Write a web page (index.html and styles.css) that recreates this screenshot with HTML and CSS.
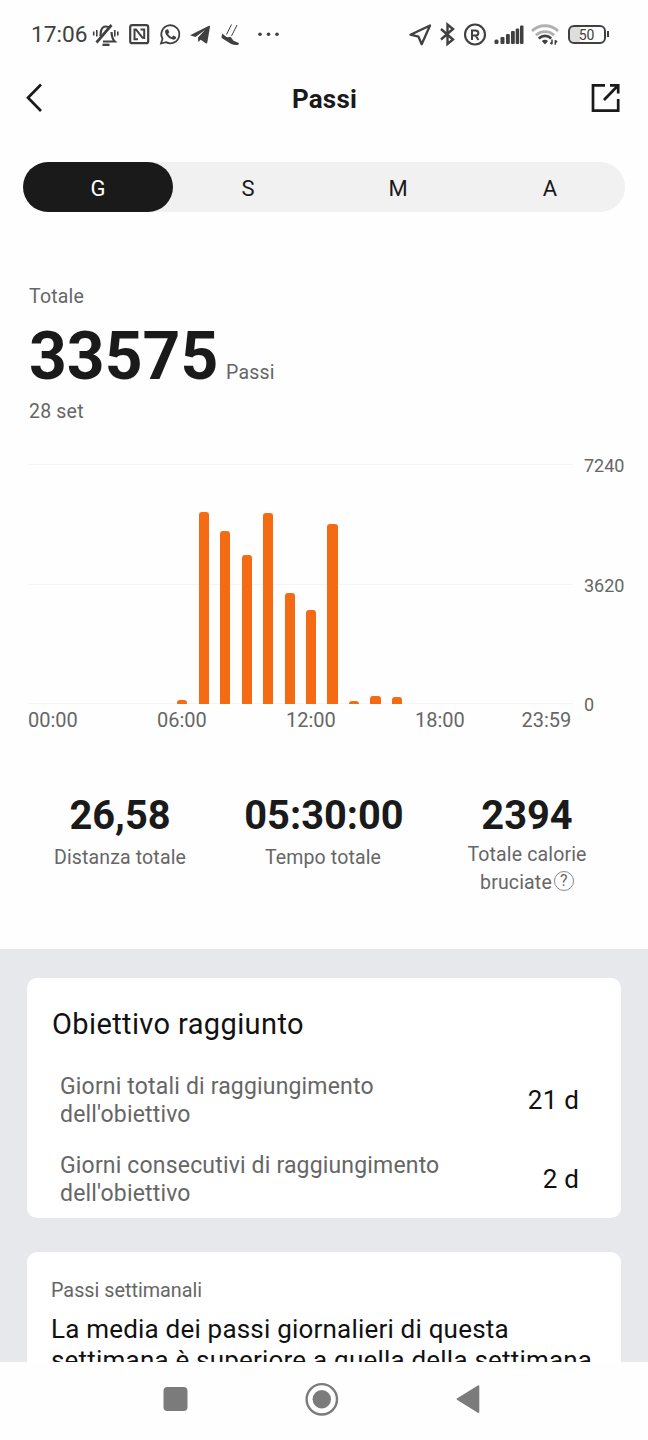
FILE: index.html
```html
<!DOCTYPE html>
<html lang="it">
<head>
<meta charset="utf-8">
<title>Passi</title>
<link rel="stylesheet" href="styles.css">
</head>
<body>
<div class="status">
  <span class="clock">17:06</span>
  <svg class="status-left" width="192" height="30" viewBox="92 20 192 30" fill="none" stroke="#404040" stroke-width="2">
    <path d="M100.500 36c.2-2 .1-3 .4-4.500.7-3.500 2.600-5 5.100-5 1.500 0 2.600.4 3.500 1.300M111.500 32c.2 4.500.7 7 3.300 9.500H103" stroke-width="2.200"/>
    <path d="M102.500 44.800h7" stroke-width="2.400"/>
    <path d="M96.500 42.500l15-17.500" stroke-width="2.700"/>
    <path d="M93.700 31.500v4M96.800 30v6.500M114.800 30v6.500M117.800 31.500v4" stroke-width="1.600"/>
    <rect x="130.200" y="25.200" width="18" height="18" rx="2" stroke-width="2.200"/>
    <path d="M138 39.300h-3.500V29.500h1.500l7 8.800M140.500 29.500h3.700V39" stroke-width="2"/>
    <path d="M161 43.500l1.500-4.800a9 9 0 1 1 3.400 3.400z" stroke-width="1.800"/>
    <path d="M166.500 29.500l1.500-.3 1.300 3-1.200 1.500c.8 1.700 2 2.700 3.700 3.500l1.500-1.600 2.900 1.400c0 2-1.700 2.900-3.300 2.600-3.800-.7-7.300-4.300-7.800-7.500-.2-1.200.5-2 1.400-2.600z" fill="#404040" stroke="none"/>
    <path d="M190 35.300L209 25.800c.8-.4 1.200 0 1 .8L207.300 42.500c-.2 1-.8 1.200-1.600.7l-5-3.500-2.500 2.300-.2-4.500 7-7.500-9.500 7z" fill="#404040" stroke="none"/>
    <path d="M231.500 24.500l-5 10M237 25l-5.500 11" stroke-width="1"/>
    <path d="M222.500 33.500c-.8 1.500-1 3-.8 4.500l9.500 6c2.500 1 5 1.300 7.300.8l.3-1.800-5.300-2.300-3-4-2.500.5c-2 0-3.500-1.700-5.500-3.700z" fill="#404040" stroke="none"/>
    <g fill="#404040" stroke="none"><circle cx="260" cy="34.300" r="1.800"/><circle cx="268.500" cy="34.300" r="1.800"/><circle cx="277" cy="34.300" r="1.800"/></g>
  </svg>
  <svg class="status-right" width="152" height="30" viewBox="408 20 152 30" fill="none" stroke="#404040" stroke-width="2">
    <path d="M430 25.500L410.500 34.700l8 2 3.200 7.600z" stroke-width="2.300" stroke-linejoin="round"/>
    <path d="M441 29l12 10.500-5.500 4.500v-19.500l5.500 4.500-12 10.500" stroke-width="2.400"/>
    <circle cx="475" cy="34.500" r="10" stroke-width="2.100"/>
    <path d="M472 40v-9.500h3.500c3.800 0 3.800 5 0 5H472M475.500 35.500l3 4.500" stroke-width="2"/>
    <g fill="#404040" stroke="none"><rect x="494.500" y="39.500" width="4" height="4.500" rx="1.500"/><rect x="500.500" y="37" width="4" height="7" rx="1"/><rect x="506" y="34" width="3.800" height="10" rx="1"/><rect x="511" y="31" width="3.800" height="13" rx="1"/><rect x="515.700" y="28.500" width="3.500" height="15.500" rx="1"/><rect x="520" y="25.500" width="3.500" height="18.500" rx="1"/></g>
    <path d="M532 31c7-7 19-7 26 0M536 35.300c5-5 13-5 18 0" stroke="#b0b0b0" stroke-width="2.800"/>
    <path d="M538.800 38.500c3.500-3.500 9-3.500 12.400 0" stroke-width="2.600"/>
    <path d="M541.800 41c1.800-1.600 4.600-1.600 6.200 0L545 44.500z" fill="#404040" stroke="none"/>
    <path d="M552 39.500v4.800m-1.700-1.700l1.700 1.700M555.300 44.800v-4.600m1.700 2l-1.700-2" stroke-width="1.500"/>
  </svg>
  <div class="battery"><span>50</span></div><i class="battery-tip"></i>
</div>

<header class="header">
  <svg width="18" height="32" viewBox="0 0 18 32"><path d="M16 2.500L3 15.700 16 29" fill="none" stroke="#1a1a1a" stroke-width="2.700"/></svg>
  <h1>Passi</h1>
  <svg width="30" height="30" viewBox="0 0 30 30" fill="none" stroke="#1a1a1a" stroke-width="2.700"><path d="M15 2.300H3v25.400h25.200V16M20 2.300h8.200v8.200M28 2.500L14 17"/></svg>
</header>

<nav class="tabs"><span class="active">G</span><span>S</span><span>M</span><span>A</span></nav>

<section class="summary">
  <p class="label">Totale</p>
  <p class="total"><strong>33575</strong><span>Passi</span></p>
  <p class="label">28 set</p>
</section>

<section class="chart">
  <div class="plot">
    <i></i><i></i><i></i><i></i><i></i><i></i>
    <i style="height:4.500px"></i><i style="height:192px"></i><i style="height:173px"></i><i style="height:149px"></i><i style="height:191.500px"></i><i style="height:111px"></i><i style="height:94px"></i><i style="height:180.500px"></i><i style="height:3px"></i><i style="height:8px"></i><i style="height:7px"></i>
    <i></i><i></i><i></i><i></i><i></i><i></i><i></i>
  </div>
  <div class="yaxis"><span>7240</span><span>3620</span><span>0</span></div>
  <div class="xaxis"><span>00:00</span><span>06:00</span><span>12:00</span><span>18:00</span><span>23:59</span></div>
</section>

<section class="stats">
  <div><strong>26,58</strong><p>Distanza totale</p></div>
  <div><strong class="time">05:30:00</strong><p>Tempo totale</p></div>
  <div class="calories"><strong>2394</strong><p>Totale calorie<br>bruciate<span class="help">?</span></p></div>
</section>

<main class="cards">
  <section class="card goal">
    <h2>Obiettivo raggiunto</h2>
    <div class="row"><p>Giorni totali di raggiungimento<br>dell'obiettivo</p><b>21 d</b></div>
    <div class="row"><p>Giorni consecutivi di raggiungimento<br>dell'obiettivo</p><b>2 d</b></div>
  </section>
  <section class="card weekly">
    <p class="caption">Passi settimanali</p>
    <p class="message">La media dei passi giornalieri di questa<br>settimana è superiore a quella della settimana</p>
  </section>
</main>

<footer class="navbar">
  <svg width="648" height="78" viewBox="0 1362 648 78" fill="#7b7b7b"><rect x="163.500" y="1387" width="24" height="24" rx="4"/><circle cx="321.800" cy="1399.300" r="15.200" fill="none" stroke="#7b7b7b" stroke-width="2.400"/><circle cx="321.800" cy="1399.300" r="9.200"/><path d="M457.300 1398.300L477.800 1385.500q1.500-.7 1.500 1v25.300q0 1.700-1.500 1L457.300 1400q-1.200-.8 0-1.700z"/></svg>
</footer>
</body>
</html>
```
FILE: styles.css
```css
* { box-sizing: border-box; }
body {
  margin: 0;
  width: 648px;
  height: 1440px;
  overflow: hidden;
  display: flex;
  flex-direction: column;
  background: #fefefe;
  color: #1a1a1a;
  font-family: Roboto, "Liberation Sans", sans-serif;
}
p, h1, h2 { margin: 0; font-weight: 400; }
svg { display: block; flex: none; }

.status { height: 70px; display: flex; align-items: flex-start; padding: 20px 0 0 31px; color: #404040; }
.clock { width: 61px; font-size: 22.700px; line-height: 30px; }
.status-right { margin-left: 124px; }
.battery {
  width: 38px; height: 19px; margin: 5px 0 0 7.500px;
  border: 2px solid #404040; border-radius: 6px;
  background: linear-gradient(90deg, #dedede 10px, transparent 10px) padding-box;
  font-size: 14px; line-height: 16px; text-align: center;
}
.battery-tip { width: 2px; height: 6px; margin: 11px 0 0 1px; background: #404040; }

.header { height: 58px; display: flex; align-items: center; justify-content: space-between; padding: 0 28px 2px 25px; }
.header h1 { font-size: 26px; font-weight: 700; letter-spacing: .2px; padding-left: 16px; padding-top: 2px; }

.tabs { height: 50px; margin: 34px 23px 0; display: flex; border-radius: 25px; background: #f1f1f1; }
.tabs span { width: 150px; border-radius: 25px; font-size: 22px; line-height: 53px; text-align: center; }
.tabs span:last-child { padding-left: 4px; }
.tabs .active { background: #1a1a1a; color: #fff; }

.summary { padding: 73px 29px 0; color: #666; }
.label { font-size: 19.500px; line-height: 24px; letter-spacing: .2px; }
.total { display: flex; align-items: baseline; height: 91px; line-height: 95px; }
.total strong { width: 197px; font-size: 66px; color: #1a1a1a; }
.total span { font-size: 19.500px; letter-spacing: .2px; }

.chart {
  display: grid;
  grid-template-columns: 545px 1fr;
  grid-template-rows: 241px 32px;
  padding: 40px 0 0 28px;
  color: #666;
}
.plot {
  display: flex;
  align-items: flex-end;
  padding: 0 15px 1px 14.500px;
  background:
    linear-gradient(#f5f5f5, #f5f5f5) 0 0 / 100% 1px no-repeat,
    linear-gradient(#f5f5f5, #f5f5f5) 0 50% / 100% 1px no-repeat,
    linear-gradient(#f5f5f5, #f5f5f5) 0 239px / 100% 1px no-repeat;
}
.plot i { flex: 1; margin: 0 5.700px; border-radius: 3px 3px 0 0; background: #f56b14; }
.yaxis { height: 263px; margin-top: -10px; padding-left: 11px; display: flex; flex-direction: column; justify-content: space-between; font-size: 18px; line-height: 24px; }
.xaxis { display: flex; font-size: 20px; line-height: 30px; }
.xaxis span { width: 129px; }
.xaxis span:nth-child(4) { width: 106.500px; }
.xaxis span:last-child { width: auto; }

.stats { display: grid; grid-template-columns: 194px 212px 195px; padding: 55px 23px 0; height: 212px; text-align: center; }
.stats strong { display: block; font-size: 39.800px; line-height: 48px; }
.stats .time { padding-left: 2px; }
.stats p { padding-top: 4px; font-size: 19.500px; line-height: 28px; letter-spacing: .15px; color: #666; }
.stats .calories p { padding-top: 1px; }
.calories { padding-left: 1px; }
.help { display: inline-block; width: 20px; height: 20px; margin-left: 2px; border: 1.500px solid #888; border-radius: 50%; font-size: 16px; line-height: 18px; letter-spacing: 0; vertical-align: 3px; }

.cards { height: 413px; flex: none; overflow: hidden; padding: 29px 27px 0; background: #e7e8ec; }
.card { border-radius: 10px; background: #fff; }
.goal { height: 240px; padding: 29px 42px 0 25px; }
.goal h2 { font-size: 29px; letter-spacing: .38px; line-height: 34px; color: #111; }
.row { display: flex; align-items: center; justify-content: space-between; height: 55px; margin-top: 31px; padding-left: 8px; }
.row + .row { margin-top: 24px; }
.row p { padding-top: 2px; font-size: 23px; letter-spacing: .17px; line-height: 27.500px; color: #666; }
.row b { font-size: 26px; font-weight: 400; letter-spacing: .2px; color: #111; }
.weekly { height: 220px; margin-top: 34px; padding: 27px 24px 0; }
.caption { font-size: 19.800px; line-height: 24px; color: #666; }
.message { padding-top: 11px; font-size: 26px; letter-spacing: .2px; line-height: 31px; color: #111; white-space: nowrap; }

.navbar { height: 78px; flex: none; background: #fefefe; }
```
